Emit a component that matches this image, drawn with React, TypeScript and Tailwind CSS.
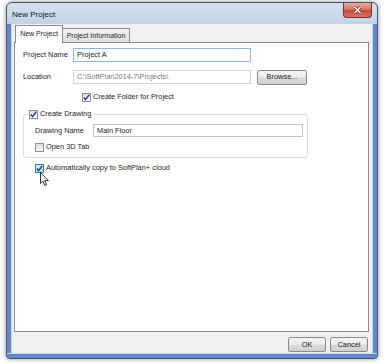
import type { ReactNode } from "react";

type CheckProps = {
  checked: boolean;
  hot?: boolean;
};

function CheckBox({ checked, hot }: CheckProps) {
  return (
    <span
      className={
        hot
          ? "flex h-[9px] w-[9px] shrink-0 items-center justify-center border border-[#3d7bad] bg-[linear-gradient(to_bottom,#d9f0fc,#b9e0f7)]"
          : "flex h-[9px] w-[9px] shrink-0 items-center justify-center border border-[#8e8f8f] bg-[linear-gradient(to_bottom,#dcdcdc,#ffffff)]"
      }
    >
      {checked && (
        <svg width="7" height="7" viewBox="0 0 7 7">
          <path
            d="M0.8 3.6 L2.6 5.6 L6.2 0.9"
            fill="none"
            stroke="#243f82"
            strokeWidth="1.5"
          />
        </svg>
      )}
    </span>
  );
}

function WinButton({ children, className }: { children: ReactNode; className: string }) {
  return (
    <div
      className={
        "flex items-center justify-center rounded-[2px] border border-[#8a8a8a] bg-[linear-gradient(to_bottom,#f4f4f4_0%,#ebebeb_48%,#dddddd_52%,#cfcfcf_100%)] text-[#1b1b1b] " +
        className
      }
    >
      {children}
    </div>
  );
}

export default function App() {
  return (
    <div className="h-[363px] w-[384px] overflow-hidden bg-white pl-[6px] pt-[2px] font-['Liberation_Sans',Arial,sans-serif] text-[7.4px] leading-[10px] text-[#1e1e1e]">
      <div className="flex h-[357px] w-[372px] flex-col overflow-hidden rounded-t-[6px] rounded-b-[4px] border border-[#48566a] bg-[#6487c7] shadow-[0_0_5px_rgba(0,0,0,0.45)]">
        {/* title bar */}
        <div className="flex h-[21px] shrink-0 items-start justify-between bg-[linear-gradient(to_bottom,#d6e1ef,#c2d2e7)] pl-[5px] pr-[5px]">
          <span className="pt-[7px] text-[8px] leading-[10px] text-[#101820]">New Project</span>
          <div className="flex h-[15px] w-[29px] items-center justify-center rounded-b-[4px] border border-t-0 border-[#7a2b24] bg-[linear-gradient(to_bottom,#eaaca1,#d67263_50%,#c54a39_51%,#d87460)]">
            <svg width="9" height="8" viewBox="0 0 9 8">
              <path d="M1.5 1 L7.5 7 M7.5 1 L1.5 7" stroke="#5a1a14" strokeWidth="2.6" />
              <path d="M1.5 1 L7.5 7 M7.5 1 L1.5 7" stroke="#ffffff" strokeWidth="1.5" />
            </svg>
          </div>
        </div>

        {/* body */}
        <div className="flex flex-1">
          <div className="w-[5px] shrink-0 border-r border-[#c9d6ea] bg-[#6388c9]" />
          <div className="flex w-[360px] flex-col bg-[#f0f0f0] pl-[2px] pr-[3px] pt-[1px]">
            {/* tabs */}
            <div className="relative z-10 -mb-px flex h-[18px] items-end pl-[1px]">
              <div className="flex h-[18px] w-[48px] items-center justify-center border border-b-0 border-[#898c95] bg-white pb-[1px] text-[7px]">
                New Project
              </div>
              <div className="mb-px flex h-[14px] w-[67px] items-center justify-center border border-b-0 border-l-0 border-[#898c95] bg-[linear-gradient(to_bottom,#f2f2f2,#e1e1e1)] text-[7px]">
                Project Information
              </div>
            </div>

            {/* tab page */}
            <div className="relative h-[290px] border border-[#898c95] bg-white pl-[8px] pt-[5px]">
              <div className="flex h-[14px] items-center">
                <span className="w-[50px]">Project Name</span>
                <div className="flex h-[14px] w-[178px] items-center border border-[#8fb6e0] bg-white pl-[3px]">
                  Project A
                </div>
              </div>

              <div className="mt-[8px] flex h-[14px] items-center">
                <span className="w-[50px]">Location</span>
                <div className="flex h-[14px] w-[178px] items-center border border-[#d4d4d4] bg-white pl-[3px] text-[#7a7a7a]">
                  C:\SoftPlan2014-7\Projects\
                </div>
                <WinButton className="ml-[6px] h-[15px] w-[50px]">Browse...</WinButton>
              </div>

              <div className="mt-[8px] flex h-[10px] items-center gap-[2px] pl-[59px]">
                <CheckBox checked />
                <span>Create Folder for Project</span>
              </div>

              <fieldset className="mt-[7px] h-[49px] w-[285px] rounded-[3px] border border-[#d5dfe5]">
                <legend className="ml-[5px] flex items-center gap-[2px] pr-[2px]">
                  <CheckBox checked />
                  <span>Create Drawing</span>
                </legend>
                <div className="mt-[5px] flex h-[13px] items-center pl-[11px]">
                  <span className="w-[58px]">Drawing Name</span>
                  <div className="flex h-[13px] w-[210px] items-center border border-[#c2c2c2] bg-white pl-[3px]">
                    Main Floor
                  </div>
                </div>
                <div className="mt-[5px] flex h-[10px] items-center gap-[2px] pl-[11px]">
                  <CheckBox checked={false} />
                  <span>Open 3D Tab</span>
                </div>
              </fieldset>

              <div className="mt-[5px] flex h-[10px] items-center gap-[2px] pl-[12px]">
                <CheckBox checked hot />
                <span>Automatically copy to SoftPlan+ cloud</span>
              </div>

              {/* mouse pointer */}
              <svg
                className="absolute left-[25px] top-[129px]"
                width="10"
                height="15"
                viewBox="0 0 10 15"
              >
                <path
                  d="M0.5 0.5 L0.5 11.5 L3 9.2 L4.8 13.6 L6.6 12.8 L4.8 8.6 L8.3 8.6 Z"
                  fill="#ffffff"
                  stroke="#1a1a1a"
                  strokeWidth="0.9"
                  strokeLinejoin="round"
                />
              </svg>
            </div>

            {/* buttons */}
            <div className="mt-[5px] flex justify-end gap-[4px] pr-[1px]">
              <WinButton className="h-[15px] w-[38px]">OK</WinButton>
              <WinButton className="h-[15px] w-[38px]">Cancel</WinButton>
            </div>
          </div>
          <div className="w-[5px] shrink-0 border-l border-[#c9d6ea] bg-[#6388c9]" />
        </div>

        <div className="h-[5px] shrink-0 border-t border-[#c9d6ea] bg-[#6388c9]" />
      </div>
    </div>
  );
}
